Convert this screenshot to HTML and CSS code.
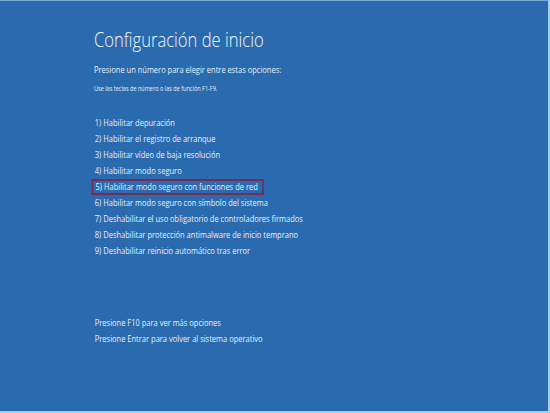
FILE: index.html
```html
<!DOCTYPE html>
<html lang="es">
<head>
<meta charset="utf-8">
<title>Configuración de inicio</title>
<link rel="stylesheet" href="styles.css">
</head>
<body>
<div class="screen">
  <div class="content">
    <h1 class="title">Configuración de inicio</h1>
    <p class="prompt">Presione un número para elegir entre estas opciones:</p>
    <p class="hint">Use las teclas de número o las de función F1-F9.</p>
    <ol class="options">
      <li>1) Habilitar depuración</li>
      <li>2) Habilitar el registro de arranque</li>
      <li>3) Habilitar vídeo de baja resolución</li>
      <li>4) Habilitar modo seguro</li>
      <li class="selected">5) Habilitar modo seguro con funciones de red</li>
      <li>6) Habilitar modo seguro con símbolo del sistema</li>
      <li>7) Deshabilitar el uso obligatorio de controladores firmados</li>
      <li>8) Deshabilitar protección antimalware de inicio temprano</li>
      <li>9) Deshabilitar reinicio automático tras error</li>
    </ol>
    <div class="footer">
      <p>Presione F10 para ver más opciones</p>
      <p>Presione Entrar para volver al sistema operativo</p>
    </div>
  </div>
</div>
</body>
</html>
```

FILE: styles.css
```css
* {
  box-sizing: border-box;
}

html, body {
  margin: 0;
  padding: 0;
}

body {
  width: 550px;
  height: 413px;
  overflow: hidden;
  background: #2a6aae;
  font-family: "Open Sans", "Noto Sans", sans-serif;
  color: #e9f0f9;
}

.screen {
  width: 550px;
  height: 413px;
  background: #2a6aae;
  border-top: 1px solid #7fa8d6;
  border-right: 2px solid #9dd3e6;
  border-bottom: 2px solid #9dd3e6;
  padding: 26px 0 0 94px;
}

.content {
  transform: scaleX(0.79);
  transform-origin: 0 0;
  width: 560px;
}

.title {
  margin: 0;
  font-size: 21px;
  line-height: 24px;
  font-weight: 300;
  color: #f4f8fc;
}

.prompt {
  margin: 11px 0 0;
  font-size: 9.5px;
  line-height: 16px;
}

.hint {
  margin: 6px 0 0;
  font-size: 7px;
  line-height: 10px;
}

.options {
  list-style: none;
  margin: 21px 0 0;
  padding: 0;
}

.options li {
  font-size: 9.5px;
  line-height: 16px;
  height: 16px;
  padding-left: 1px;
}

.options li.selected {
  margin-left: -3px;
  padding-left: 3px;
  width: 218px;
  border: 2px solid #7a2a4e;
  line-height: 12px;
}

.footer {
  margin-top: 56px;
}

.footer p {
  margin: 0;
  font-size: 9.5px;
  line-height: 16px;
  padding-left: 1px;
}
```
